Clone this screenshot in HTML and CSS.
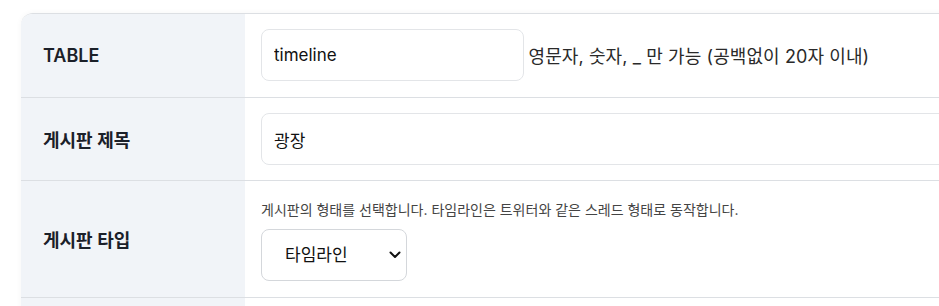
FILE: index.html
```html
<!DOCTYPE html>
<html lang="ko">
<head>
<meta charset="utf-8">
<link rel="stylesheet" href="styles.css">
</head>
<body>
<div class="page">
  <table class="form-table">
    <tr class="row-table">
      <th>TABLE</th>
      <td>
        <input class="field short" type="text" value="timeline">
        <span class="help">영문자, 숫자, _ 만 가능 (공백없이 20자 이내)</span>
      </td>
    </tr>
    <tr class="row-title">
      <th>게시판 제목</th>
      <td><input class="field wide" type="text" value="광장"></td>
    </tr>
    <tr class="row-type">
      <th>게시판 타입</th>
      <td>
        <div class="hint">게시판의 형태를 선택합니다. 타임라인은 트위터와 같은 스레드 형태로 동작합니다.</div>
        <div class="select-wrap">
          <select class="select">
            <option>타임라인</option>
          </select>
          <svg class="chevron" width="12" height="8" viewBox="0 0 12 8"><path d="M1.5 1.5 L6 6 L10.5 1.5" fill="none" stroke="#111" stroke-width="2" stroke-linecap="round" stroke-linejoin="round"/></svg>
        </div>
      </td>
    </tr>
    <tr class="row-last">
      <th></th>
      <td></td>
    </tr>
  </table>
</div>
</body>
</html>
```

FILE: styles.css
```css
html, body {
  margin: 0;
  padding: 0;
  background: #ffffff;
  overflow: hidden;
}
body {
  font-family: "Inter", "Noto Sans CJK KR", sans-serif;
  color: #222;
}
.page {
  padding: 13px 0 0 21px;
}
.form-table {
  width: 1000px;
  border-collapse: separate;
  border-spacing: 0;
  border-top: 1px solid #dcdfe3;
  border-radius: 12px 0 0 0;
  overflow: hidden;
  box-shadow: 0 0 6px rgba(0,0,0,0.04);
}
.form-table th {
  width: 224px;
  box-sizing: border-box;
  background: #f1f4f8;
  text-align: left;
  padding: 15px 22px 16px;
  font-size: 18px;
  font-weight: 600;
  color: #1b2029;
  border-bottom: 1px solid #dcdfe3;
}
.form-table td {
  padding: 15px 16px 16px 16px;
  border-bottom: 1px solid #dcdfe3;
  background: #fff;
  font-size: 16px;
}
.row-title td,
.row-title th {
  padding-bottom: 15px;
}
.row-last th,
.row-last td {
  height: 40px;
  border-bottom: none;
}
.field {
  box-sizing: border-box;
  height: 52px;
  border: 1px solid #e3e5e8;
  border-radius: 8px;
  padding: 0 12px;
  font-family: "Inter", "Noto Sans CJK KR", sans-serif;
  font-size: 17px;
  color: #111;
  background: #fff;
  outline: none;
  vertical-align: middle;
}
.field.short {
  width: 263px;
}
.field.wide {
  width: 100%;
}
.help {
  font-size: 18px;
  letter-spacing: 0.1px;
  color: #2a2a2a;
  vertical-align: middle;
}
.hint {
  font-size: 14px;
  line-height: 20px;
  color: #444;
  margin: 4px 0 9px;
}
.select-wrap {
  position: relative;
  width: 146px;
}
.select {
  appearance: none;
  -webkit-appearance: none;
  box-sizing: border-box;
  width: 146px;
  height: 52px;
  border: 1px solid #d4d7db;
  border-radius: 8px;
  padding: 0 12px 0 23px;
  font-family: "Inter", "Noto Sans CJK KR", sans-serif;
  font-size: 17px;
  color: #111;
  background: #fff;
}
.chevron {
  position: absolute;
  right: 6px;
  top: 22px;
  pointer-events: none;
}
```
